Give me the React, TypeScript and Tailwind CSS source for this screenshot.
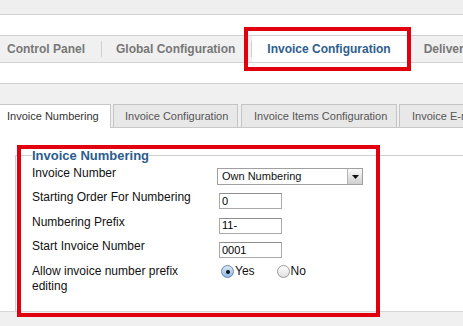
import React from "react";

function TextInput({ value }: { value: string }) {
  return (
    <div className="ml-[2px] mt-[3px] flex h-[16px] w-[63px] items-center border border-[#a9a9a9] border-t-[#8e8e8e] bg-white pl-[2px] text-[11px] leading-none text-black">
      {value}
    </div>
  );
}

function Radio({ checked }: { checked: boolean }) {
  return checked ? (
    <span className="flex h-[13px] w-[13px] shrink-0 items-center justify-center rounded-full border border-[#6d87a8] bg-gradient-to-b from-[#d9e8f7] to-[#8fb8e4]">
      <span className="block h-[4px] w-[4px] rounded-full bg-[#111]" />
    </span>
  ) : (
    <span className="block h-[13px] w-[13px] shrink-0 rounded-full border border-[#9a9a9a] bg-gradient-to-b from-[#ffffff] to-[#dedede]" />
  );
}

export default function App() {
  return (
    <div
      className="relative h-[326px] w-[463px] overflow-hidden bg-[#f0f0f0]"
      style={{ fontFamily: '"Liberation Sans", Arial, sans-serif' }}
    >
      <div className="h-[15px] border-b border-[#d2d2d2] bg-[#efefef]" />
      <div className="h-[21px] border-b border-[#d2d2d2] bg-white" />
      <div className="flex h-[27px] items-center whitespace-nowrap border-b border-[#d2d2d2] bg-[#f0f0f0] text-[12px] font-bold">
        <span className="ml-[7px] text-[#777]">Control Panel</span>
        <span className="ml-[16px] h-[16px] w-px shrink-0 bg-[#d0d0d0]" />
        <span className="ml-[14px] text-[#777]">Global Configuration</span>
        <span className="ml-[16px] h-[16px] w-px shrink-0 bg-[#d0d0d0]" />
        <span className="flex h-full shrink-0 items-center bg-white pl-[15px] pr-[16px] text-[#2e5e8e]">
          Invoice Configuration
        </span>
        <span className="ml-[17px] text-[#777]">Delivery Configuration</span>
      </div>
      <div className="h-[21px] border-b border-[#d2d2d2] bg-white" />
      <div className="h-[20px] bg-[#f0f0f0]" />
      <div className="flex h-[24px] whitespace-nowrap border-b border-[#c8c8c8] text-[11px]">
        <div className="relative z-10 mb-[-1px] flex w-[111px] shrink-0 items-center border-r border-t border-[#c8c8c8] bg-white pl-[7px] text-[#333]">
          Invoice Numbering
        </div>
        <div className="ml-[2px] flex w-[125px] shrink-0 items-center border-l border-r border-t border-[#c4c4c4] bg-[#e8e8e8] pl-[11px] text-[#555]">
          Invoice Configuration
        </div>
        <div className="ml-[3px] flex w-[156px] shrink-0 items-center border-l border-r border-t border-[#c4c4c4] bg-[#e8e8e8] pl-[12px] text-[#555]">
          Invoice Items Configuration
        </div>
        <div className="ml-[2px] flex w-[120px] shrink-0 items-center border-l border-r border-t border-[#c4c4c4] bg-[#e8e8e8] pl-[12px] text-[#555]">
          Invoice E-mail Configuration
        </div>
      </div>
      <div className="h-[184px] border-b border-[#d6d6d6] bg-white pt-[20px]">
        <fieldset className="ml-[15px] h-[163px] border-l border-t border-[#cfcfcf] pl-[16px] pt-[3px]">
          <legend className="text-[13px] font-bold leading-[15px] text-[#2b5d8f]">Invoice Numbering</legend>
          <div className="text-[12px] leading-[15px] text-[#111]">
            <div className="flex h-[24px]">
              <div className="w-[185px] shrink-0">Invoice Number</div>
              <div className="mt-[2px] flex h-[17px] w-[146px] items-center justify-between border border-[#a0a0a0] bg-white text-[11px] leading-none">
                <span className="pl-[4px]">Own Numbering</span>
                <span className="flex h-full w-[15px] items-center justify-center border-l border-[#b5b5b5] bg-gradient-to-b from-[#fafafa] to-[#cfcfcf]">
                  <svg width="7" height="4" viewBox="0 0 7 4">
                    <path d="M0 0 L7 0 L3.5 4 Z" fill="#111" />
                  </svg>
                </span>
              </div>
            </div>
            <div className="flex h-[24.5px]">
              <div className="w-[185px] shrink-0">Starting Order For Numbering</div>
              <TextInput value="0" />
            </div>
            <div className="flex h-[24.5px]">
              <div className="w-[185px] shrink-0">Numbering Prefix</div>
              <TextInput value="11-" />
            </div>
            <div className="flex h-[25px]">
              <div className="w-[185px] shrink-0">Start Invoice Number</div>
              <TextInput value="0001" />
            </div>
            <div className="flex">
              <div className="w-[160px] shrink-0">Allow invoice number prefix editing</div>
              <div className="ml-[29px] flex h-[15px] items-center">
                <Radio checked />
                <span className="ml-[1px]">Yes</span>
                <span className="ml-[22px]">
                  <Radio checked={false} />
                </span>
                <span className="ml-[1px]">No</span>
              </div>
            </div>
          </div>
        </fieldset>
      </div>
      <div className="pointer-events-none absolute left-[244px] top-[27px] h-[44px] w-[167px] border-4 border-[#e2000f]" />
      <div className="pointer-events-none absolute left-[17px] top-[145px] h-[172px] w-[363px] border-4 border-[#e2000f]" />
    </div>
  );
}
